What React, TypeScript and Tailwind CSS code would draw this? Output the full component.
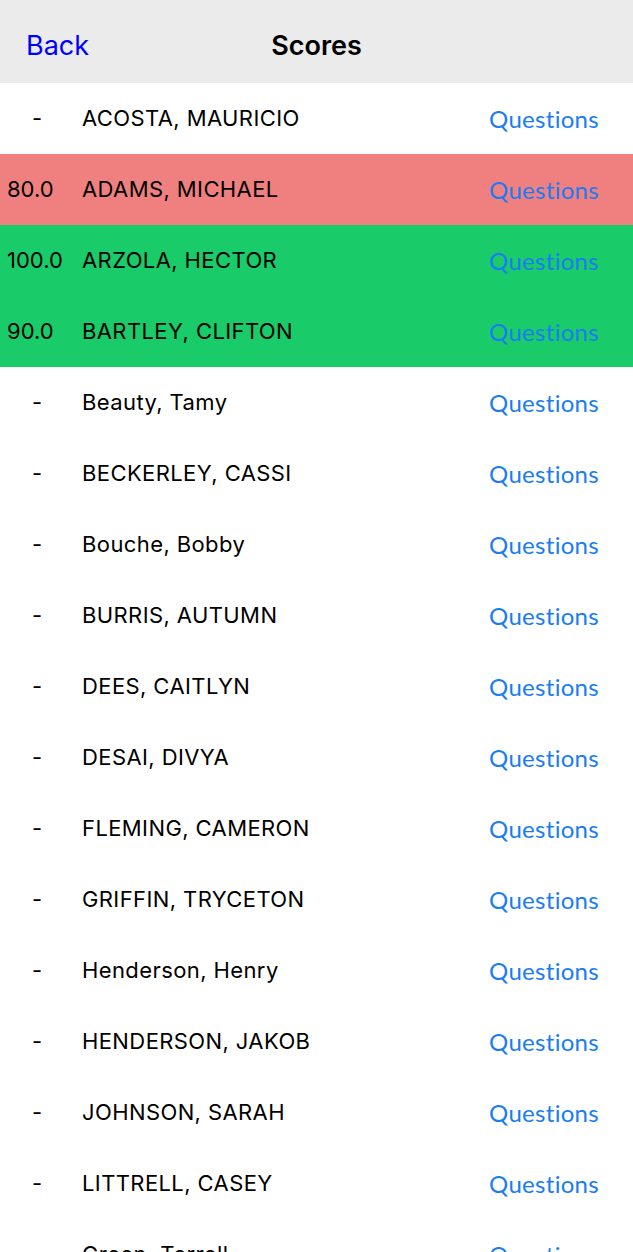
type Row = { score: string; name: string; tone?: "red" | "green" };

const rows: Row[] = [
  { score: "-", name: "ACOSTA, MAURICIO" },
  { score: "80.0", name: "ADAMS, MICHAEL", tone: "red" },
  { score: "100.0", name: "ARZOLA, HECTOR", tone: "green" },
  { score: "90.0", name: "BARTLEY, CLIFTON", tone: "green" },
  { score: "-", name: "Beauty, Tamy" },
  { score: "-", name: "BECKERLEY, CASSI" },
  { score: "-", name: "Bouche, Bobby" },
  { score: "-", name: "BURRIS, AUTUMN" },
  { score: "-", name: "DEES, CAITLYN" },
  { score: "-", name: "DESAI, DIVYA" },
  { score: "-", name: "FLEMING, CAMERON" },
  { score: "-", name: "GRIFFIN, TRYCETON" },
  { score: "-", name: "Henderson, Henry" },
  { score: "-", name: "HENDERSON, JAKOB" },
  { score: "-", name: "JOHNSON, SARAH" },
  { score: "-", name: "LITTRELL, CASEY" },
  { score: "-", name: "Green, Terrell" },
];

function ScoreRow({ row }: { row: Row }) {
  const bg =
    row.tone === "red" ? "bg-[#f08080]" : row.tone === "green" ? "bg-[#19cb69]" : "bg-white";
  const blank = row.score === "-";
  return (
    <div className={`flex h-[71px] shrink-0 items-center ${bg}`}>
      <div
        className={`w-[74px] text-[22px] text-black ${blank ? "text-center" : "pl-[7px] text-left"}`}
      >
        {row.score}
      </div>
      <div className="ml-[8px] flex-1 text-[22px] tracking-[0.4px] text-black">{row.name}</div>
      <div className="mr-[34px] font-['Lato',sans-serif] text-[24px] tracking-[0.3px] text-[#1a7cf5]">
        Questions
      </div>
    </div>
  );
}

export default function App() {
  return (
    <div className="flex h-[1252px] w-[633px] flex-col overflow-hidden bg-white font-['Inter',sans-serif]">
      <div className="relative flex h-[83px] shrink-0 items-center bg-[#ebebeb] px-[26px] pt-[10px]">
        <span className="text-[27px] text-[#0000ff]">Back</span>
        <span className="absolute left-0 right-0 text-center text-[27px] font-semibold text-black">
          Scores
        </span>
      </div>
      {rows.map((r, i) => (
        <ScoreRow key={i} row={r} />
      ))}
    </div>
  );
}
